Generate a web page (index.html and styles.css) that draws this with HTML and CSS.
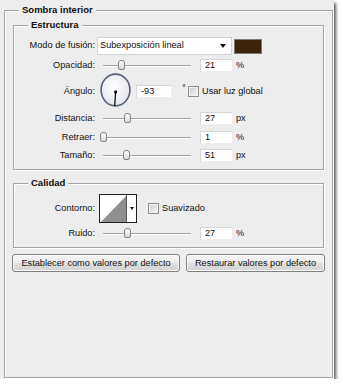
FILE: index.html
```html
<!DOCTYPE html>
<html lang="es">
<head>
<meta charset="utf-8">
<title>Sombra interior</title>
<link rel="stylesheet" href="styles.css">
</head>
<body>
<div class="panel">
  <fieldset class="group outer">
    <legend>Sombra interior</legend>

    <fieldset class="group inner estructura">
      <legend>Estructura</legend>

      <div class="row r-mode">
        <span class="lbl">Modo de fusión:</span>
        <div class="select"><span>Subexposición lineal</span><span class="caret"></span></div>
        <div class="swatch"></div>
      </div>

      <div class="row r-slider mt4">
        <span class="lbl">Opacidad:</span>
        <div class="track"><span class="thumb" style="left:15px"></span></div>
        <div class="num">21</div><span class="unit">%</span>
      </div>

      <div class="row r-angle mt1">
        <span class="lbl lbl-angle">Ángulo:</span>
        <svg class="dial" viewBox="0 0 31 34" width="31" height="34">
          <defs>
            <radialGradient id="dg" cx="45%" cy="40%" r="65%">
              <stop offset="0" stop-color="#ffffff"/>
              <stop offset="1" stop-color="#e2e4ea"/>
            </radialGradient>
          </defs>
          <ellipse cx="15.5" cy="17" rx="14.4" ry="15.9" fill="url(#dg)" stroke="#55607f" stroke-width="1.6"/>
          <line x1="15.6" y1="19" x2="14.7" y2="33" stroke="#111" stroke-width="1.3"/>
          <rect x="14.3" y="17.6" width="2.7" height="2.7" fill="#000"/>
        </svg>
        <div class="num num-angle">-93</div><span class="deg">°</span>
        <span class="check"></span><span class="check-text">Usar luz global</span>
      </div>

      <div class="row r-slider mt5">
        <span class="lbl">Distancia:</span>
        <div class="track"><span class="thumb" style="left:21px"></span></div>
        <div class="num">27</div><span class="unit">px</span>
      </div>

      <div class="row r-slider mt6">
        <span class="lbl">Retraer:</span>
        <div class="track"><span class="thumb" style="left:-3px"></span></div>
        <div class="num">1</div><span class="unit">%</span>
      </div>

      <div class="row r-slider mt5">
        <span class="lbl">Tamaño:</span>
        <div class="track"><span class="thumb" style="left:20px"></span></div>
        <div class="num">51</div><span class="unit">px</span>
      </div>
    </fieldset>

    <fieldset class="group inner calidad">
      <legend>Calidad</legend>

      <div class="row r-contour">
        <span class="lbl">Contorno:</span>
        <div class="contour">
          <svg class="curve" viewBox="0 0 26 27" width="26" height="27">
            <rect width="26" height="27" fill="#fff"/>
            <polygon points="1,27 26,1 26,27" fill="#8f8f8f"/>
          </svg>
          <div class="contour-btn"><span class="caret caret-sm"></span></div>
        </div>
        <span class="check check-smooth"></span><span class="check-text">Suavizado</span>
      </div>

      <div class="row r-slider mt4">
        <span class="lbl">Ruido:</span>
        <div class="track"><span class="thumb" style="left:21px"></span></div>
        <div class="num">27</div><span class="unit">%</span>
      </div>
    </fieldset>

    <div class="actions">
      <button class="btn btn-set" type="button">Establecer como valores por defecto</button>
      <button class="btn btn-reset" type="button">Restaurar valores por defecto</button>
    </div>
  </fieldset>
</div>
</body>
</html>
```

FILE: styles.css
```css
* { box-sizing: border-box; }

html, body {
  margin: 0;
  background: #ffffff;
}

body {
  font-family: "Liberation Sans", Arial, sans-serif;
  font-size: 9.2px;
  line-height: 1;
  color: #111111;
}

.panel {
  width: 334px;
  height: 379px;
  padding: 4px 0 0 4px;
  background: #ededed;
  box-shadow: 2px 3px 3px rgba(0, 0, 0, 0.65);
}

.group {
  margin: 0;
  min-width: 0;
  border: 1px solid #a4a4a4;
  box-shadow: inset 1px 1px 0 #ffffff, 1px 1px 0 #ffffff;
}

.group > legend {
  font-size: 9.5px;
  font-weight: bold;
  line-height: 12px;
  padding: 0 3px;
  background: #ededed;
  color: #0d0d0d;
}

.outer {
  width: 329px;
  height: 374px;
  padding: 3px 8px 0;
}

.outer > legend { margin-left: 6px; }

.inner > legend { margin-left: 14px; }

.estructura { padding: 6px 0 7px; }

.calidad {
  margin-top: 7px;
  padding: 5px 0 7px;
}

.row {
  display: flex;
  align-items: center;
}

.mt1 { margin-top: 1px; }
.mt4 { margin-top: 4px; }
.mt5 { margin-top: 5px; }
.mt6 { margin-top: 6px; }

.r-mode { height: 18px; }
.r-slider { height: 13px; }
.r-angle { height: 34px; }
.r-contour { height: 29px; }

.lbl {
  flex: none;
  width: 81px;
  text-align: right;
  white-space: nowrap;
}

.lbl-angle, .r-angle .num, .r-angle .check, .r-angle .check-text { margin-top: 3px; }

/* blend mode dropdown */
.select {
  flex: none;
  margin-left: 2px;
  width: 135px;
  height: 18px;
  display: flex;
  align-items: center;
  padding: 0 5px 0 2px;
  background: #ffffff;
  border: 1px solid #d2d2d2;
  white-space: nowrap;
}

.caret {
  margin-left: auto;
  width: 0;
  height: 0;
  border-left: 3px solid transparent;
  border-right: 3px solid transparent;
  border-top: 4px solid #111111;
}

.swatch {
  flex: none;
  margin-left: 2px;
  width: 28px;
  height: 15px;
  background: #3a2409;
  border: 1px solid #7b7b7b;
}

/* sliders */
.track {
  flex: none;
  position: relative;
  margin-left: 8px;
  width: 88px;
  height: 13px;
  background:
    linear-gradient(#a3a3a3, #a3a3a3) 0 6px / 100% 1px no-repeat,
    linear-gradient(#ffffff, #ffffff) 0 7px / 100% 1px no-repeat;
}

.thumb {
  position: absolute;
  top: 1px;
  width: 7px;
  height: 10px;
  border: 1px solid #858585;
  border-radius: 3px 3px 2px 2px;
  background: linear-gradient(#fefefe, #d6d6d6);
}

.num {
  flex: none;
  margin-left: 9px;
  width: 33px;
  height: 13px;
  display: flex;
  align-items: center;
  padding-left: 4px;
  background: #ffffff;
  border: 1px solid;
  border-color: #d6d6d6 #eeeeee #eeeeee #d6d6d6;
}

.unit { margin-left: 3px; }

/* angle */
.dial {
  flex: none;
  display: block;
  margin-left: 5px;
}

.num-angle {
  margin-left: 5px;
  width: 36px;
}

.deg {
  margin-left: 10px;
  align-self: flex-start;
  margin-top: 12px;
  color: #222222;
  font-family: "DejaVu Sans", sans-serif;
  font-size: 8px;
}

.check {
  flex: none;
  width: 11px;
  height: 11px;
  margin-left: 2px;
  border: 1px solid #8e8f8f;
  background: linear-gradient(135deg, #cdcdcd, #f6f6f6);
  box-shadow: inset 0 0 0 1px #f4f4f4;
}

.check-text {
  margin-left: 3px;
  white-space: nowrap;
}

/* contour */
.contour {
  flex: none;
  display: flex;
  margin-left: 4px;
  width: 38px;
  height: 29px;
  border: 1px solid #1f1f1f;
  background: #ffffff;
}

.curve { display: block; flex: none; }

.contour-btn {
  flex: 1;
  display: flex;
  align-items: center;
  justify-content: center;
  border-left: 1px solid #555555;
}

.caret-sm {
  margin: 0;
  border-left-width: 2px;
  border-right-width: 2px;
  border-top-width: 3px;
}

.check-smooth { margin-left: 11px; }

/* buttons */
.actions {
  display: flex;
  gap: 6px;
  margin: 6px -1px 0;
}

.btn {
  height: 18px;
  padding: 0;
  font-family: "Liberation Sans", Arial, sans-serif;
  font-size: 9.2px;
  color: #111111;
  border: 1px solid #7f7f7f;
  border-radius: 3px;
  background: linear-gradient(#f4f4f4 0%, #ececec 50%, #dedede 51%, #d4d4d4 100%);
  box-shadow: inset 0 0 0 1px #fafafa;
  white-space: nowrap;
}

.btn-set { width: 168px; flex: none; }
.btn-reset { flex: 1; }
```
